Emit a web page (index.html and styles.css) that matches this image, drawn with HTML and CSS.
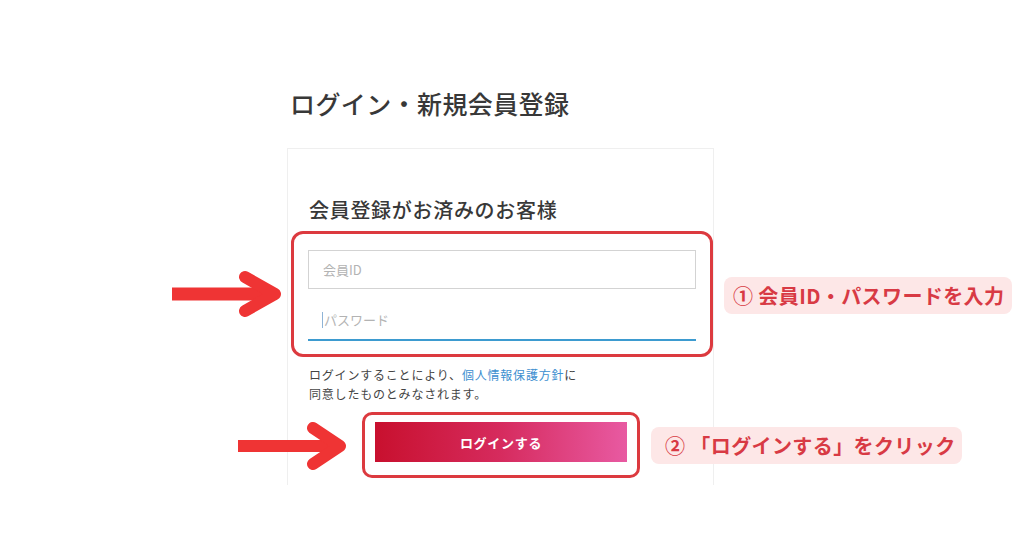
FILE: index.html
```html
<!DOCTYPE html>
<html lang="ja">

<head>
  <meta charset="utf-8">
  <meta name="viewport" content="width=device-width, initial-scale=1.0">
  <title>ログイン・新規会員登録</title>
  <link rel="stylesheet" href="styles.css">
</head>

<body>
  <div id="stage">
    <div id="main">
      <h1 class="pageTitle">ログイン・新規会員登録</h1>
      <div class="card">
        <h2 class="cardTitle">会員登録がお済みのお客様</h2>
        <div class="markBox fieldsBox">
          <input type="text" class="idInput" placeholder="会員ID">
          <div class="passWrap">
            <span class="caret"></span>
            <input type="password" class="passInput" placeholder="パスワード">
          </div>
        </div>
        <p class="note">ログインすることにより、<a href="#">個人情報保護方針</a>に<br>同意したものとみなされます。</p>
        <div class="markBox buttonBox">
          <button type="button" class="loginButton">ログインする</button>
        </div>
      </div>
    </div>

    <!-- annotations drawn over the page -->
    <svg class="arrow arrowOne" width="120" height="50" viewBox="0 0 120 50">
      <line x1="0" y1="25" x2="98" y2="25" stroke="#ef3434" stroke-width="13" />
      <polyline points="73,8 103,25 73,42" fill="none" stroke="#ef3434" stroke-width="12" stroke-linecap="round" stroke-linejoin="round" />
    </svg>
    <svg class="arrow arrowTwo" width="120" height="50" viewBox="0 0 120 50">
      <line x1="0" y1="25" x2="96" y2="25" stroke="#ef3434" stroke-width="12" />
      <polyline points="75,7 102,25 75,43" fill="none" stroke="#ef3434" stroke-width="12" stroke-linecap="round" stroke-linejoin="round" />
    </svg>
    <div class="tag tagOne">① 会員ID・パスワードを入力</div>
    <div class="tag tagTwo">② 「ログインする」をクリック</div>
  </div>
</body>

</html>
```

FILE: styles.css
```css
html,
body {
  margin: 0;
  padding: 0;
  background-color: #fff;
  overflow: hidden;
}

body {
  font-family: "Noto Sans CJK JP", "Noto Sans", sans-serif;
  color: #333;
}

#stage {
  position: relative;
  width: 1024px;
  height: 538px;
  overflow: hidden;
}

#main {
  padding: 84px 0 0 287px;
}

.pageTitle {
  margin: 0 0 0 3px;
  font-size: 25px;
  line-height: 38px;
  font-weight: 500;
  letter-spacing: 0.4px;
  color: #383838;
}

.card {
  width: 425px;
  height: 336px;
  margin-top: 26px;
  border: 1px solid #efefef;
  border-bottom: none;
}

.cardTitle {
  margin: 46px 0 0 21px;
  font-size: 20px;
  line-height: 30px;
  font-weight: 500;
  letter-spacing: 0.7px;
  color: #383838;
}

.markBox {
  border: 3px solid #dc3a3f;
  border-radius: 12px;
}

.fieldsBox {
  width: 388px;
  margin: 6px 0 0 3px;
  padding: 16px 14px 13px 14px;
}

.idInput {
  display: block;
  box-sizing: border-box;
  width: 100%;
  height: 39px;
  padding: 0 14px;
  border: 1px solid #d3d3d3;
  border-radius: 0;
  font-family: inherit;
  font-size: 13px;
  outline: none;
}

.passWrap {
  position: relative;
  margin-top: 10px;
}

.passInput {
  display: block;
  box-sizing: border-box;
  width: 100%;
  height: 42px;
  padding: 0 16px;
  border: none;
  border-bottom: 2px solid #3d9bd0;
  font-family: inherit;
  font-size: 13px;
  outline: none;
}

.idInput::placeholder,
.passInput::placeholder {
  color: #b3b3b3;
}

.caret {
  position: absolute;
  left: 14px;
  top: 13px;
  width: 1px;
  height: 16px;
  background-color: #8fb4d6;
}

.note {
  margin: 8px 0 0 21px;
  font-size: 12px;
  line-height: 19px;
  letter-spacing: 0.8px;
  color: #444;
}

.note a {
  color: #3d8fd0;
  text-decoration: none;
}

.buttonBox {
  width: 252px;
  margin: 9px 0 0 74px;
  padding: 7px 10px 13px 10px;
  border-radius: 10px;
}

.loginButton {
  display: block;
  width: 252px;
  height: 40px;
  border: none;
  border-radius: 0;
  background: linear-gradient(90deg, #c8102e 0%, #d62b5e 50%, #e85aa2 100%);
  color: #fff;
  font-family: inherit;
  font-size: 13px;
  font-weight: 700;
  letter-spacing: 0.7px;
  cursor: pointer;
}

.arrow {
  position: absolute;
}

.arrowOne {
  left: 172px;
  top: 269px;
}

.arrowTwo {
  left: 238px;
  top: 421px;
}

.tag {
  position: absolute;
  height: 37px;
  padding: 0 9px;
  border-radius: 8px;
  background-color: #fde7e7;
  color: #d83a44;
  font-size: 20px;
  font-weight: 700;
  line-height: 37px;
  letter-spacing: 0.4px;
  white-space: nowrap;
}

.tagOne {
  left: 724px;
  top: 277px;
  width: 270px;
}

.tagTwo {
  left: 651px;
  top: 427px;
  width: 293px;
  padding-left: 14px;
  padding-right: 4px;
}
```
